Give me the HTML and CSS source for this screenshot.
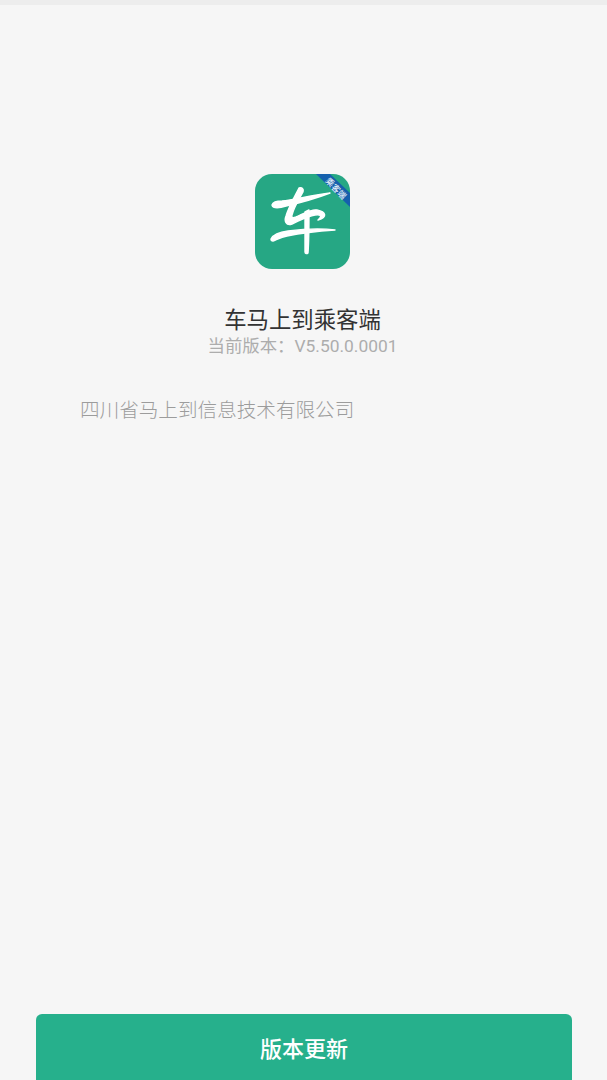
FILE: index.html
```html
<!DOCTYPE html>
<html lang="zh-CN">
<head>
  <meta charset="UTF-8" />
  <meta name="viewport" content="width=device-width, initial-scale=1" />
  <title>关于</title>
  <link rel="stylesheet" href="styles.css">
</head>
<body>
<div class="page">
  <div class="top-line"></div>

  <div class="about">
    <!-- app logo -->
    <svg class="logo" viewBox="0 0 95 95" width="95" height="95">
      <defs>
        <clipPath id="logoClip"><rect width="95" height="95" rx="17" /></clipPath>
      </defs>
      <g clip-path="url(#logoClip)">
        <rect width="95" height="95" fill="#26a784" />
        <polygon points="61,0 75,0 95,19 95,33" fill="#1560ad" />
        <text class="ribbon" transform="translate(80.5 15) rotate(45)" text-anchor="middle">乘客端</text>
      </g>
      <g class="brush">
        <!-- top brush stroke -->
        <path d="M17 31 C18 28 22 27 27 27 C41 25 59 21 75 19 C62 24 44 29 31 32 C25 34 18 35 17 31 Z" />
        <!-- slanted stroke running into the loop -->
        <path d="M44 14 C47 13 49 15 48 18 C44 25 39 33 37 41 C36 44 38 44 41 43 C48 40 56 35 62 36 C71 38 73 43 63 46 C68 42 65 40 60 41 C52 42 44 47 37 50 C31 52 29 47 31 42 C34 32 40 22 44 14 Z" />
        <!-- long bottom stroke -->
        <path d="M16 65 C18 61 25 58 33 57 C48 55 66 54 80 56 C64 57 46 59 32 62 C26 63 21 66 18 67 C16 67 16 66 16 65 Z" />
        <!-- vertical -->
        <path d="M50 38 L54 36 C54 50 54 66 53 79 C52 80 50 80 50 78 Z" />
      </g>
    </svg>

    <h1 class="app-name">车马上到乘客端</h1>
    <p class="version">当前版本：V5.50.0.0001</p>
  </div>

  <p class="company">四川省马上到信息技术有限公司</p>

  <div class="footer">
    <button class="update-btn" type="button">版本更新</button>
  </div>
</div>
</body>
</html>
```

FILE: styles.css
```css
* {
  margin: 0;
  padding: 0;
  box-sizing: border-box;
}

body {
  background: #f6f6f6;
  font-family: "Roboto", "Noto Sans CJK SC", sans-serif;
}

.page {
  display: flex;
  flex-direction: column;
  height: 1080px;
  overflow: hidden;
}

.top-line {
  height: 5px;
  background: #ededed;
}

.about {
  display: flex;
  flex-direction: column;
  align-items: center;
  margin-top: 169px;
  padding-right: 2px;
}

.logo {
  display: block;
}

.brush {
  fill: #fff;
  stroke: #fff;
  stroke-width: 1.4;
  stroke-linejoin: round;
}

.ribbon {
  font-family: "Noto Sans CJK SC", sans-serif;
  font-size: 8.5px;
  font-weight: 500;
  fill: #e4eef8;
  dominant-baseline: middle;
}

.app-name {
  margin-top: 37px;
  font-size: 22.4px;
  line-height: 28px;
  font-weight: 400;
  color: #333;
}

.version {
  font-size: 17.4px;
  line-height: 24px;
  color: #adadad;
}

.company {
  margin-top: 39px;
  padding-left: 80px;
  font-size: 19.6px;
  line-height: 28px;
  font-weight: 300;
  color: #9c9c9c;
}

.footer {
  margin-top: auto;
  padding: 0 35px 0 36px;
}

.update-btn {
  display: block;
  width: 100%;
  height: 66px;
  border: none;
  border-radius: 6px 6px 0 0;
  background: #26b08c;
  color: #fff;
  font-family: "Noto Sans CJK SC", sans-serif;
  font-size: 22px;
  font-weight: 500;
}
```
